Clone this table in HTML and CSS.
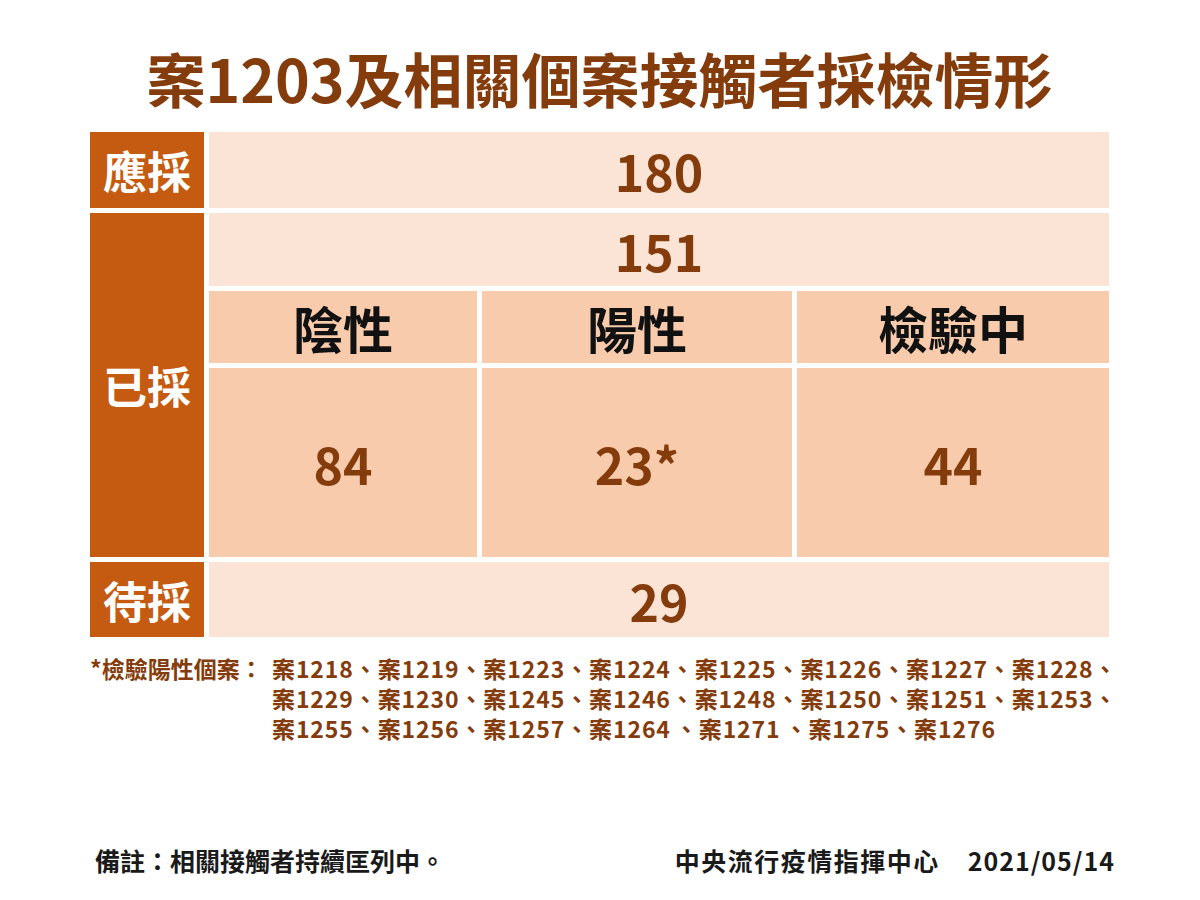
FILE: index.html
```html
<!DOCTYPE html>
<html lang="zh-Hant">
<head>
<meta charset="utf-8">
<title>案1203及相關個案接觸者採檢情形</title>
<link rel="stylesheet" href="styles.css">
</head>
<body>
<div class="page">
  <h1 class="title">案1203及相關個案接觸者採檢情形</h1>
  <div class="table">
    <div class="head head-a">應採</div>
    <div class="cell light span3 num">180</div>
    <div class="head head-b">已採</div>
    <div class="cell light span3 num">151</div>
    <div class="cell mid sub">陰性</div>
    <div class="cell mid sub">陽性</div>
    <div class="cell mid sub">檢驗中</div>
    <div class="cell mid num">84</div>
    <div class="cell mid num">23*</div>
    <div class="cell mid num">44</div>
    <div class="head">待採</div>
    <div class="cell light span3 num">29</div>
  </div>
  <div class="note">
    <div class="note-label">*檢驗陽性個案：</div>
    <div class="note-list">
      <div class="note-line">案1218、案1219、案1223、案1224、案1225、案1226、案1227、案1228、</div>
      <div class="note-line">案1229、案1230、案1245、案1246、案1248、案1250、案1251、案1253、</div>
      <div class="note-line">案1255、案1256、案1257、案1264<span class="thin"></span>、案1271<span class="thin"></span>、案1275、案1276</div>
    </div>
  </div>
  <div class="footer">
    <div class="remark">備註：相關接觸者持續匡列中。</div>
    <div class="source">中央流行疫情指揮中心<span class="date">2021/05/14</span></div>
  </div>
</div>
</body>
</html>
```

FILE: styles.css
```css
html, body {
  margin: 0;
  padding: 0;
  background: #ffffff;
}
body {
  font-family: "Noto Sans CJK TC", "Noto Sans", sans-serif;
  width: 1200px;
  height: 900px;
  overflow: hidden;
}
.page {
  padding: 0 91px 0 90px;
}
.title {
  margin: 0;
  height: 132px;
  box-sizing: border-box;
  padding-top: 36px;
  font-size: 59px;
  line-height: 84px;
  font-weight: 700;
  color: #843c0c;
  text-align: center;
}
.table {
  display: grid;
  grid-template-columns: 114px 268px 310px 312px;
  grid-template-rows: 76px 73px 72px 189px 75px;
  gap: 5px;
}
.head {
  background: #c55a11;
  color: #ffffff;
  font-size: 44px;
  font-weight: 700;
  display: flex;
  align-items: center;
  justify-content: center;
}
.head-b {
  grid-row: span 3;
}
.cell {
  display: flex;
  align-items: center;
  justify-content: center;
  font-weight: 700;
}
.span3 {
  grid-column: span 3;
}
.light {
  background: #fbe4d5;
}
.mid {
  background: #f8cbad;
}
.num {
  color: #843c0c;
  font-size: 50px;
}
.sub {
  color: #111111;
  font-size: 50px;
}
.note {
  display: flex;
  margin-top: 16px;
  font-size: 23px;
  line-height: 30px;
  font-weight: 700;
  color: #843c0c;
}
.note-label {
  width: 182px;
  flex: none;
}
.note-list {
  letter-spacing: 0.9px;
}
.note-line {
  white-space: nowrap;
}
.thin {
  display: inline-block;
  width: 4px;
}
.footer {
  display: flex;
  justify-content: space-between;
  margin-top: 101px;
  padding: 0 0 0 5px;
  font-size: 25px;
  line-height: 32px;
  font-weight: 700;
  color: #1a1a1a;
}
.source {
  margin-right: -6px;
  letter-spacing: 1.5px;
}
.date {
  margin-left: 28px;
  letter-spacing: 1px;
}
```
